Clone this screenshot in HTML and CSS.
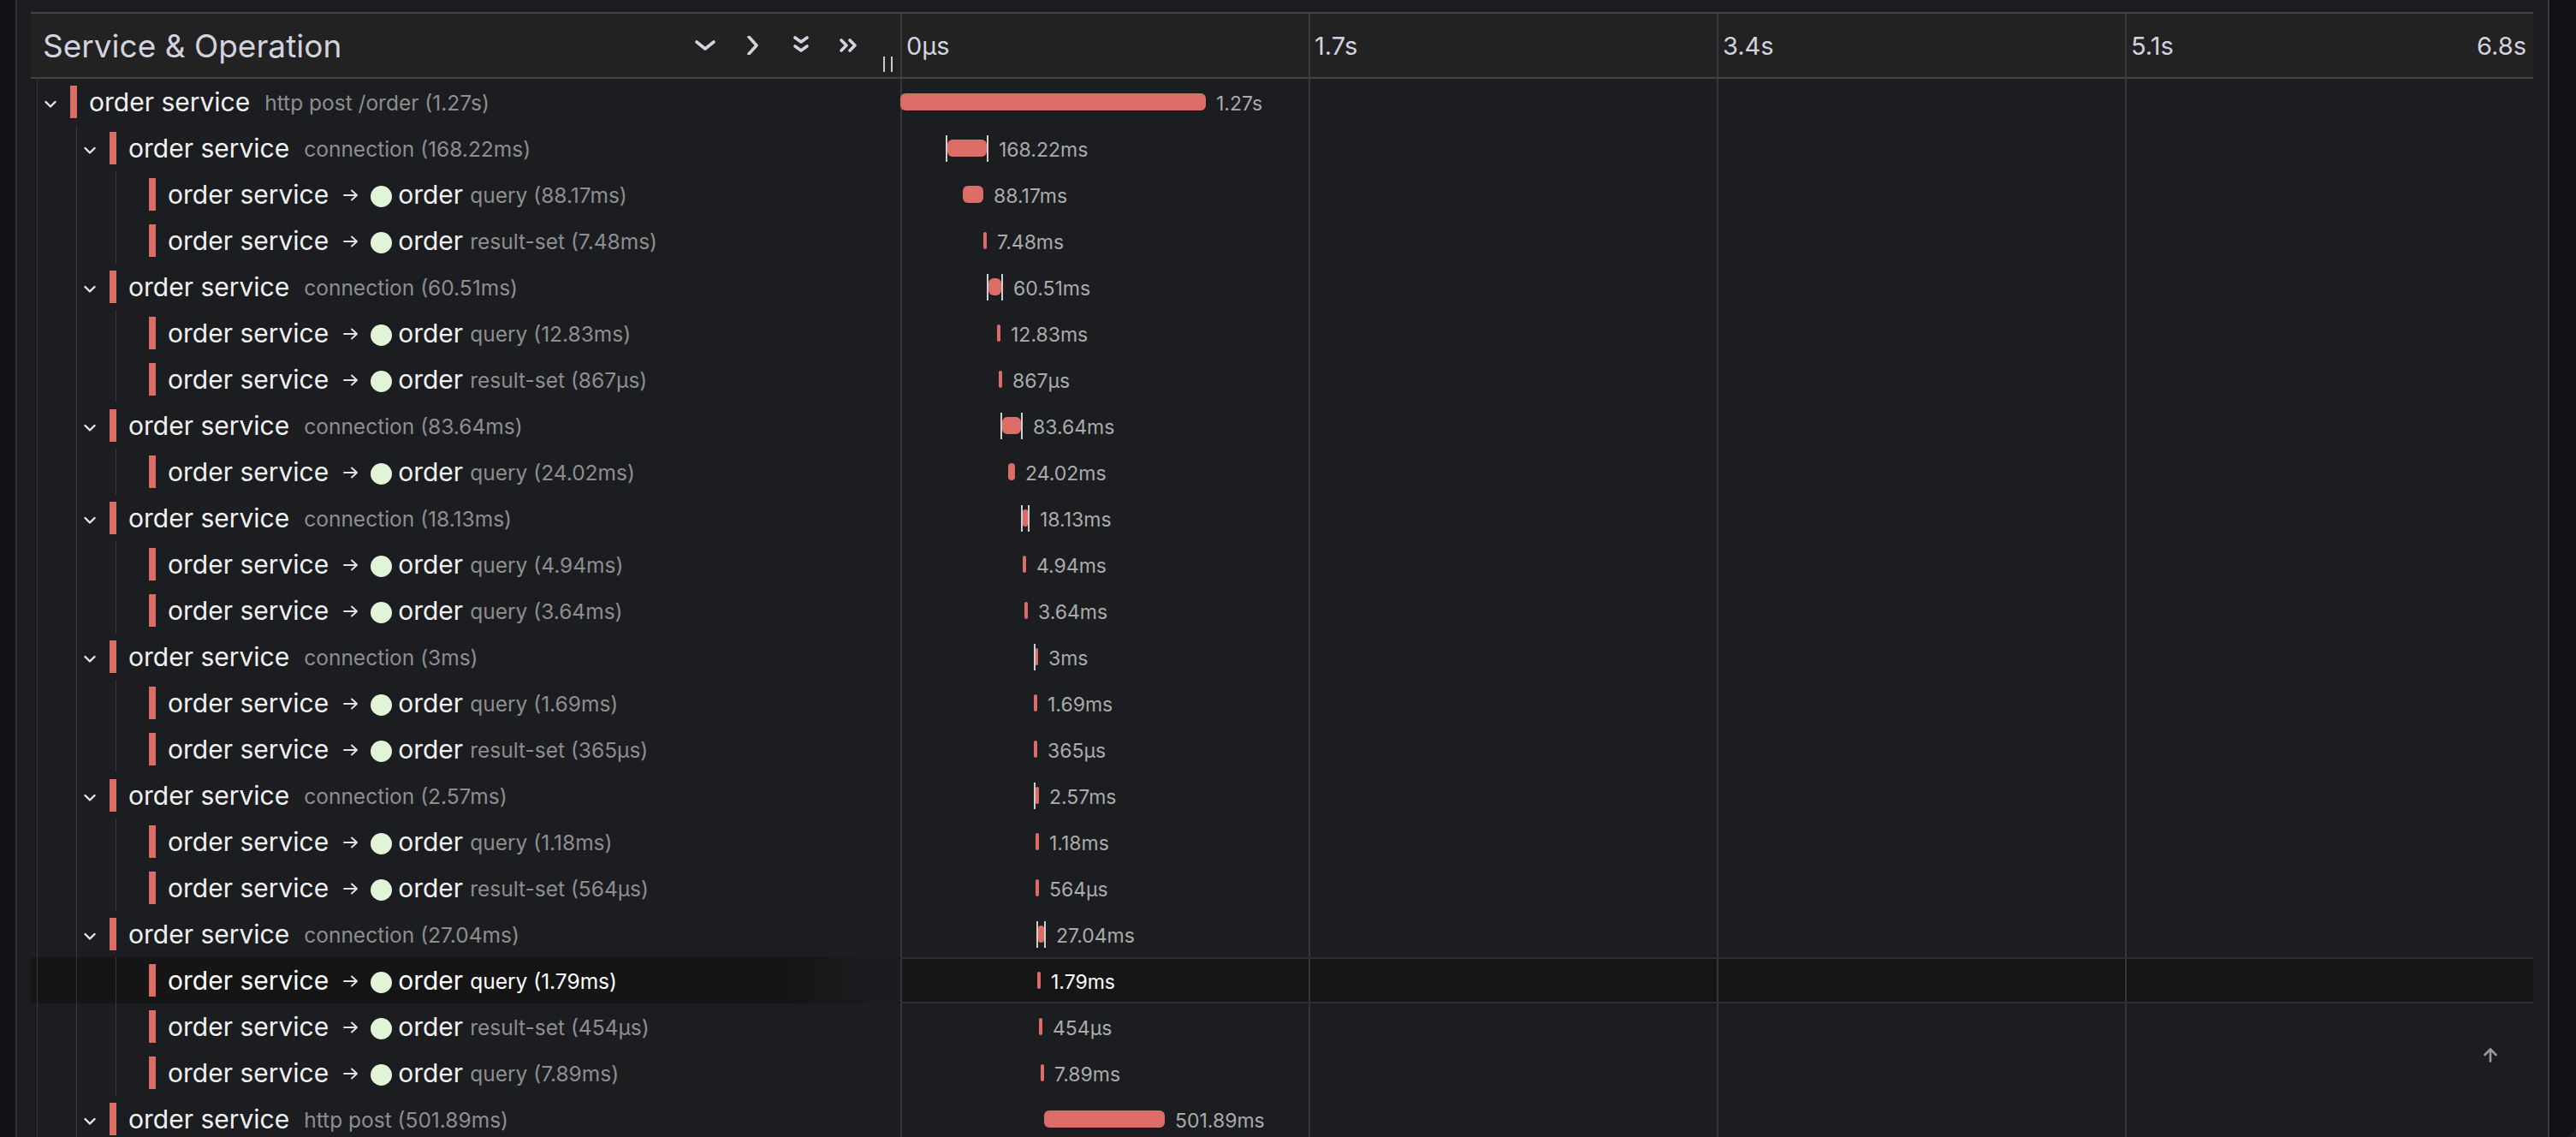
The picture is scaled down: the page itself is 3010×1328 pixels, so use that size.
FILE: index.html
```html
<!DOCTYPE html>
<html lang="en">
<head>
<meta charset="utf-8">
<title>Trace timeline</title>
<link rel="stylesheet" href="styles.css">
</head>
<body>
<div class="app">
  <aside class="rail-left"></aside>
  <main class="main">
    <section class="trace">
      <div class="trace-header">
        <div class="th-name">
          <span class="title">Service &amp; Operation</span>
          <div class="tools">
            <svg class="tool" viewBox="0 0 26 22" width="26" height="22"><polyline points="3,7 13,15 23,7"/></svg>
            <svg class="tool" viewBox="0 0 26 22" width="26" height="22"><polyline points="8,1 17,11 8,21"/></svg>
            <svg class="tool" viewBox="0 0 26 22" width="26" height="22"><polyline points="6,2 13,7 20,2"/><polyline points="6,12 13,17 20,12"/></svg>
            <svg class="tool" viewBox="0 0 26 22" width="26" height="22"><polyline points="4,5 10,11 4,17"/><polyline points="14,5 20,11 14,17"/></svg>
          </div>
          <span class="resizer"></span>
        </div>
        <div class="th-ticks">
          <span class="tick-label">0µs</span>
          <span class="tick-label">1.7s</span>
          <span class="tick-label">3.4s</span>
          <span class="tick-label tick-last"><span>5.1s</span><span>6.8s</span></span>
        </div>
      </div>

      <div class="rows">
        <!-- 1 -->
        <div class="row">
          <div class="name-cell">
            <span class="toggle"><svg class="chev" viewBox="0 0 14 10" width="14" height="10"><polyline points="1.5,2 7,7.5 12.5,2"/></svg></span>
            <span class="svc-bar"></span>
            <span class="svc">order service</span><span class="op">http post /order (1.27s)</span>
          </div>
          <div class="time-cell"><span class="bar" style="margin-left:0px;width:357px"></span><span class="label">1.27s</span></div>
        </div>
        <!-- 2 -->
        <div class="row">
          <div class="name-cell">
            <span class="guide"></span>
            <span class="toggle"><svg class="chev" viewBox="0 0 14 10" width="14" height="10"><polyline points="1.5,2 7,7.5 12.5,2"/></svg></span>
            <span class="svc-bar"></span>
            <span class="svc">order service</span><span class="op">connection (168.22ms)</span>
          </div>
          <div class="time-cell"><span class="ticks" style="margin-left:53px"><span class="bar" style="width:46px"></span></span><span class="label">168.22ms</span></div>
        </div>
        <!-- 3 -->
        <div class="row">
          <div class="name-cell">
            <span class="guide"></span><span class="guide"></span><span class="toggle"></span>
            <span class="svc-bar"></span>
            <span class="svc">order service</span><svg class="arrow" viewBox="0 0 18 14" width="18" height="14"><path d="M1 7H16M10 1.5L16 7L10 12.5"/></svg><span class="dot"></span><span class="svc">order</span><span class="op op-tight">query (88.17ms)</span>
          </div>
          <div class="time-cell"><span class="bar" style="margin-left:73px;width:24px"></span><span class="label">88.17ms</span></div>
        </div>
        <!-- 4 -->
        <div class="row">
          <div class="name-cell">
            <span class="guide"></span><span class="guide"></span><span class="toggle"></span>
            <span class="svc-bar"></span>
            <span class="svc">order service</span><svg class="arrow" viewBox="0 0 18 14" width="18" height="14"><path d="M1 7H16M10 1.5L16 7L10 12.5"/></svg><span class="dot"></span><span class="svc">order</span><span class="op op-tight">result-set (7.48ms)</span>
          </div>
          <div class="time-cell"><span class="bar" style="margin-left:97px;width:4px"></span><span class="label">7.48ms</span></div>
        </div>
        <!-- 5 -->
        <div class="row">
          <div class="name-cell">
            <span class="guide"></span>
            <span class="toggle"><svg class="chev" viewBox="0 0 14 10" width="14" height="10"><polyline points="1.5,2 7,7.5 12.5,2"/></svg></span>
            <span class="svc-bar"></span>
            <span class="svc">order service</span><span class="op">connection (60.51ms)</span>
          </div>
          <div class="time-cell"><span class="ticks" style="margin-left:101px"><span class="bar" style="width:15px"></span></span><span class="label">60.51ms</span></div>
        </div>
        <!-- 6 -->
        <div class="row">
          <div class="name-cell">
            <span class="guide"></span><span class="guide"></span><span class="toggle"></span>
            <span class="svc-bar"></span>
            <span class="svc">order service</span><svg class="arrow" viewBox="0 0 18 14" width="18" height="14"><path d="M1 7H16M10 1.5L16 7L10 12.5"/></svg><span class="dot"></span><span class="svc">order</span><span class="op op-tight">query (12.83ms)</span>
          </div>
          <div class="time-cell"><span class="bar" style="margin-left:113px;width:4px"></span><span class="label">12.83ms</span></div>
        </div>
        <!-- 7 -->
        <div class="row">
          <div class="name-cell">
            <span class="guide"></span><span class="guide"></span><span class="toggle"></span>
            <span class="svc-bar"></span>
            <span class="svc">order service</span><svg class="arrow" viewBox="0 0 18 14" width="18" height="14"><path d="M1 7H16M10 1.5L16 7L10 12.5"/></svg><span class="dot"></span><span class="svc">order</span><span class="op op-tight">result-set (867µs)</span>
          </div>
          <div class="time-cell"><span class="bar" style="margin-left:115px;width:4px"></span><span class="label">867µs</span></div>
        </div>
        <!-- 8 -->
        <div class="row">
          <div class="name-cell">
            <span class="guide"></span>
            <span class="toggle"><svg class="chev" viewBox="0 0 14 10" width="14" height="10"><polyline points="1.5,2 7,7.5 12.5,2"/></svg></span>
            <span class="svc-bar"></span>
            <span class="svc">order service</span><span class="op">connection (83.64ms)</span>
          </div>
          <div class="time-cell"><span class="ticks" style="margin-left:117px"><span class="bar" style="width:22px"></span></span><span class="label">83.64ms</span></div>
        </div>
        <!-- 9 -->
        <div class="row">
          <div class="name-cell">
            <span class="guide"></span><span class="guide"></span><span class="toggle"></span>
            <span class="svc-bar"></span>
            <span class="svc">order service</span><svg class="arrow" viewBox="0 0 18 14" width="18" height="14"><path d="M1 7H16M10 1.5L16 7L10 12.5"/></svg><span class="dot"></span><span class="svc">order</span><span class="op op-tight">query (24.02ms)</span>
          </div>
          <div class="time-cell"><span class="bar" style="margin-left:126px;width:8px"></span><span class="label">24.02ms</span></div>
        </div>
        <!-- 10 -->
        <div class="row">
          <div class="name-cell">
            <span class="guide"></span>
            <span class="toggle"><svg class="chev" viewBox="0 0 14 10" width="14" height="10"><polyline points="1.5,2 7,7.5 12.5,2"/></svg></span>
            <span class="svc-bar"></span>
            <span class="svc">order service</span><span class="op">connection (18.13ms)</span>
          </div>
          <div class="time-cell"><span class="ticks" style="margin-left:141px"><span class="bar" style="width:6px"></span></span><span class="label">18.13ms</span></div>
        </div>
        <!-- 11 -->
        <div class="row">
          <div class="name-cell">
            <span class="guide"></span><span class="guide"></span><span class="toggle"></span>
            <span class="svc-bar"></span>
            <span class="svc">order service</span><svg class="arrow" viewBox="0 0 18 14" width="18" height="14"><path d="M1 7H16M10 1.5L16 7L10 12.5"/></svg><span class="dot"></span><span class="svc">order</span><span class="op op-tight">query (4.94ms)</span>
          </div>
          <div class="time-cell"><span class="bar" style="margin-left:143px;width:4px"></span><span class="label">4.94ms</span></div>
        </div>
        <!-- 12 -->
        <div class="row">
          <div class="name-cell">
            <span class="guide"></span><span class="guide"></span><span class="toggle"></span>
            <span class="svc-bar"></span>
            <span class="svc">order service</span><svg class="arrow" viewBox="0 0 18 14" width="18" height="14"><path d="M1 7H16M10 1.5L16 7L10 12.5"/></svg><span class="dot"></span><span class="svc">order</span><span class="op op-tight">query (3.64ms)</span>
          </div>
          <div class="time-cell"><span class="bar" style="margin-left:145px;width:4px"></span><span class="label">3.64ms</span></div>
        </div>
        <!-- 13 -->
        <div class="row">
          <div class="name-cell">
            <span class="guide"></span>
            <span class="toggle"><svg class="chev" viewBox="0 0 14 10" width="14" height="10"><polyline points="1.5,2 7,7.5 12.5,2"/></svg></span>
            <span class="svc-bar"></span>
            <span class="svc">order service</span><span class="op">connection (3ms)</span>
          </div>
          <div class="time-cell"><span class="ticks ticks-single" style="margin-left:156px"><span class="bar" style="width:3px"></span></span><span class="label">3ms</span></div>
        </div>
        <!-- 14 -->
        <div class="row">
          <div class="name-cell">
            <span class="guide"></span><span class="guide"></span><span class="toggle"></span>
            <span class="svc-bar"></span>
            <span class="svc">order service</span><svg class="arrow" viewBox="0 0 18 14" width="18" height="14"><path d="M1 7H16M10 1.5L16 7L10 12.5"/></svg><span class="dot"></span><span class="svc">order</span><span class="op op-tight">query (1.69ms)</span>
          </div>
          <div class="time-cell"><span class="bar" style="margin-left:156px;width:4px"></span><span class="label">1.69ms</span></div>
        </div>
        <!-- 15 -->
        <div class="row">
          <div class="name-cell">
            <span class="guide"></span><span class="guide"></span><span class="toggle"></span>
            <span class="svc-bar"></span>
            <span class="svc">order service</span><svg class="arrow" viewBox="0 0 18 14" width="18" height="14"><path d="M1 7H16M10 1.5L16 7L10 12.5"/></svg><span class="dot"></span><span class="svc">order</span><span class="op op-tight">result-set (365µs)</span>
          </div>
          <div class="time-cell"><span class="bar" style="margin-left:156px;width:4px"></span><span class="label">365µs</span></div>
        </div>
        <!-- 16 -->
        <div class="row">
          <div class="name-cell">
            <span class="guide"></span>
            <span class="toggle"><svg class="chev" viewBox="0 0 14 10" width="14" height="10"><polyline points="1.5,2 7,7.5 12.5,2"/></svg></span>
            <span class="svc-bar"></span>
            <span class="svc">order service</span><span class="op">connection (2.57ms)</span>
          </div>
          <div class="time-cell"><span class="ticks ticks-single" style="margin-left:156px"><span class="bar" style="width:4px"></span></span><span class="label">2.57ms</span></div>
        </div>
        <!-- 17 -->
        <div class="row">
          <div class="name-cell">
            <span class="guide"></span><span class="guide"></span><span class="toggle"></span>
            <span class="svc-bar"></span>
            <span class="svc">order service</span><svg class="arrow" viewBox="0 0 18 14" width="18" height="14"><path d="M1 7H16M10 1.5L16 7L10 12.5"/></svg><span class="dot"></span><span class="svc">order</span><span class="op op-tight">query (1.18ms)</span>
          </div>
          <div class="time-cell"><span class="bar" style="margin-left:158px;width:4px"></span><span class="label">1.18ms</span></div>
        </div>
        <!-- 18 -->
        <div class="row">
          <div class="name-cell">
            <span class="guide"></span><span class="guide"></span><span class="toggle"></span>
            <span class="svc-bar"></span>
            <span class="svc">order service</span><svg class="arrow" viewBox="0 0 18 14" width="18" height="14"><path d="M1 7H16M10 1.5L16 7L10 12.5"/></svg><span class="dot"></span><span class="svc">order</span><span class="op op-tight">result-set (564µs)</span>
          </div>
          <div class="time-cell"><span class="bar" style="margin-left:158px;width:4px"></span><span class="label">564µs</span></div>
        </div>
        <!-- 19 -->
        <div class="row">
          <div class="name-cell">
            <span class="guide"></span>
            <span class="toggle"><svg class="chev" viewBox="0 0 14 10" width="14" height="10"><polyline points="1.5,2 7,7.5 12.5,2"/></svg></span>
            <span class="svc-bar"></span>
            <span class="svc">order service</span><span class="op">connection (27.04ms)</span>
          </div>
          <div class="time-cell"><span class="ticks" style="margin-left:159px"><span class="bar" style="width:7px"></span></span><span class="label">27.04ms</span></div>
        </div>
        <!-- 20 (hovered) -->
        <div class="row row-hover">
          <div class="name-cell">
            <span class="guide"></span><span class="guide"></span><span class="toggle"></span>
            <span class="svc-bar"></span>
            <span class="svc">order service</span><svg class="arrow" viewBox="0 0 18 14" width="18" height="14"><path d="M1 7H16M10 1.5L16 7L10 12.5"/></svg><span class="dot"></span><span class="svc">order</span><span class="op op-tight">query (1.79ms)</span>
          </div>
          <div class="time-cell"><span class="bar" style="margin-left:160px;width:4px"></span><span class="label">1.79ms</span></div>
        </div>
        <!-- 21 -->
        <div class="row">
          <div class="name-cell">
            <span class="guide"></span><span class="guide"></span><span class="toggle"></span>
            <span class="svc-bar"></span>
            <span class="svc">order service</span><svg class="arrow" viewBox="0 0 18 14" width="18" height="14"><path d="M1 7H16M10 1.5L16 7L10 12.5"/></svg><span class="dot"></span><span class="svc">order</span><span class="op op-tight">result-set (454µs)</span>
          </div>
          <div class="time-cell"><span class="bar" style="margin-left:162px;width:4px"></span><span class="label">454µs</span></div>
        </div>
        <!-- 22 -->
        <div class="row">
          <div class="name-cell">
            <span class="guide"></span><span class="guide"></span><span class="toggle"></span>
            <span class="svc-bar"></span>
            <span class="svc">order service</span><svg class="arrow" viewBox="0 0 18 14" width="18" height="14"><path d="M1 7H16M10 1.5L16 7L10 12.5"/></svg><span class="dot"></span><span class="svc">order</span><span class="op op-tight">query (7.89ms)</span>
          </div>
          <div class="time-cell"><span class="bar" style="margin-left:164px;width:4px"></span><span class="label">7.89ms</span></div>
        </div>
        <!-- 23 -->
        <div class="row">
          <div class="name-cell">
            <span class="guide"></span>
            <span class="toggle"><svg class="chev" viewBox="0 0 14 10" width="14" height="10"><polyline points="1.5,2 7,7.5 12.5,2"/></svg></span>
            <span class="svc-bar"></span>
            <span class="svc">order service</span><span class="op">http post (501.89ms)</span>
          </div>
          <div class="time-cell"><span class="bar" style="margin-left:168px;width:141px"></span><span class="label">501.89ms</span></div>
        </div>
      </div>
    </section>
    <button class="to-top" aria-label="Scroll to top"><svg viewBox="0 0 18 18" width="18" height="18"><path d="M9 16.5V2.5M2.5 9L9 2.5L15.5 9"/></svg></button>
  </main>
  <aside class="rail-right"></aside>
</div>
</body>
</html>
```

FILE: styles.css
```css
* { box-sizing: border-box; }

html, body {
  margin: 0;
  padding: 0;
  background: #1b1d21;
  font-family: Inter, "Noto Sans", "Liberation Sans", sans-serif;
  overflow: hidden;
}

.app {
  display: flex;
  width: 3010px;
  height: 1328px;
}

.rail-left {
  flex: none;
  width: 20px;
  background: #111215;
  border-right: 2px solid #303236;
}

.rail-right {
  flex: none;
  width: 33px;
  background: #111215;
  border-left: 2px solid #3a3c40;
  border-bottom-right-radius: 14px;
}

.main {
  flex: 1;
  position: relative;
  padding: 14px 17px 0 16px;
  overflow: hidden;
  background: #1b1d21;
}

/* ---------- header ---------- */
.trace-header {
  display: grid;
  grid-template-columns: 1016px 1fr;
  height: 78px;
  background: #222222;
  border-top: 2px solid #434343;
  border-bottom: 2px solid #434343;
}

.th-name {
  display: flex;
  align-items: center;
  padding: 0 9px 0 14px;
}

.title {
  font-size: 37px;
  color: #d3d3df;
}

.tools {
  display: flex;
  align-items: center;
  gap: 30px;
  margin-left: auto;
}

.tool {
  fill: none;
  stroke: #d3d3df;
  stroke-width: 3.6;
  stroke-linecap: round;
  stroke-linejoin: round;
}

.resizer {
  align-self: flex-end;
  width: 11px;
  height: 18px;
  margin: 0 0 6px 27px;
  border-left: 2px solid #c9c9c9;
  border-right: 2px solid #c9c9c9;
}

.th-ticks {
  display: grid;
  grid-template-columns: repeat(4, 1fr);
}

.tick-label {
  display: flex;
  align-items: center;
  justify-content: space-between;
  padding: 0 8px 0 5px;
  border-left: 2px solid #38393c;
  font-size: 29px;
  color: #d3d3df;
}

/* ---------- rows ---------- */
.row {
  display: grid;
  grid-template-columns: 1016px 1fr;
  height: 54px;
}

.name-cell {
  display: flex;
  align-items: center;
  padding-left: 7px;
  white-space: nowrap;
}

.guide {
  flex: none;
  align-self: stretch;
  width: 46px;
  border-left: 1px solid #35373b;
}

.toggle {
  flex: none;
  align-self: stretch;
  display: flex;
  align-items: center;
  width: 39px;
  padding-left: 8px;
  border-left: 1px solid #35373b;
}

.chev {
  margin-top: 6px;
  fill: none;
  stroke: #e6e6e6;
  stroke-width: 2.4;
  stroke-linecap: round;
  stroke-linejoin: round;
}

.svc-bar {
  flex: none;
  width: 8px;
  height: 38px;
  margin-right: 14px;
  background: #db6d66;
}

.svc {
  font-size: 30px;
  font-weight: 400;
  color: #f2f2f2;
}

.op {
  margin: 2px 0 0 17px;
  font-size: 24.5px;
  color: #8e8e8e;
}

.op-tight {
  margin-left: 8px;
}

.arrow {
  flex: none;
  margin: 2px 14px 0 17px;
  fill: none;
  stroke: #e2e2e2;
  stroke-width: 2;
  stroke-linecap: round;
  stroke-linejoin: round;
}

.dot {
  flex: none;
  width: 25px;
  height: 25px;
  margin: 4px 7px 0 0;
  border-radius: 50%;
  background: #e1f4d8;
}

.time-cell {
  display: flex;
  align-items: center;
  background-image: linear-gradient(90deg, #35373b 2px, transparent 2px);
  background-size: 25% 100%;
  white-space: nowrap;
}

.bar {
  flex: none;
  height: 20px;
  border-radius: 6px;
  background: #db6d66;
}

.ticks {
  flex: none;
  display: flex;
  align-items: center;
  height: 31px;
  border-left: 2px solid #cfcfcf;
  border-right: 2px solid #cfcfcf;
}

.ticks-single {
  border-right: none;
}

.label {
  margin: 4px 0 0 12px;
  font-size: 23px;
  color: #ababab;
}

/* hovered row */
.row-hover .name-cell {
  background: linear-gradient(90deg, #151515 0%, #151515 86%, #1b1d21 100%);
}

.row-hover .time-cell {
  background-color: #161616;
  box-shadow: inset 0 2px 0 #2e2f31, inset 0 -2px 0 #2e2f31;
}

.row-hover .op,
.row-hover .label,
.row-hover .svc {
  color: #ffffff;
}

/* scroll to top */
.to-top {
  position: absolute;
  right: 58px;
  top: 1223px;
  padding: 0;
  border: 0;
  background: none;
  line-height: 0;
}

.to-top svg {
  fill: none;
  stroke: #9797a9;
  stroke-width: 2.6;
  stroke-linecap: round;
  stroke-linejoin: round;
}
```
